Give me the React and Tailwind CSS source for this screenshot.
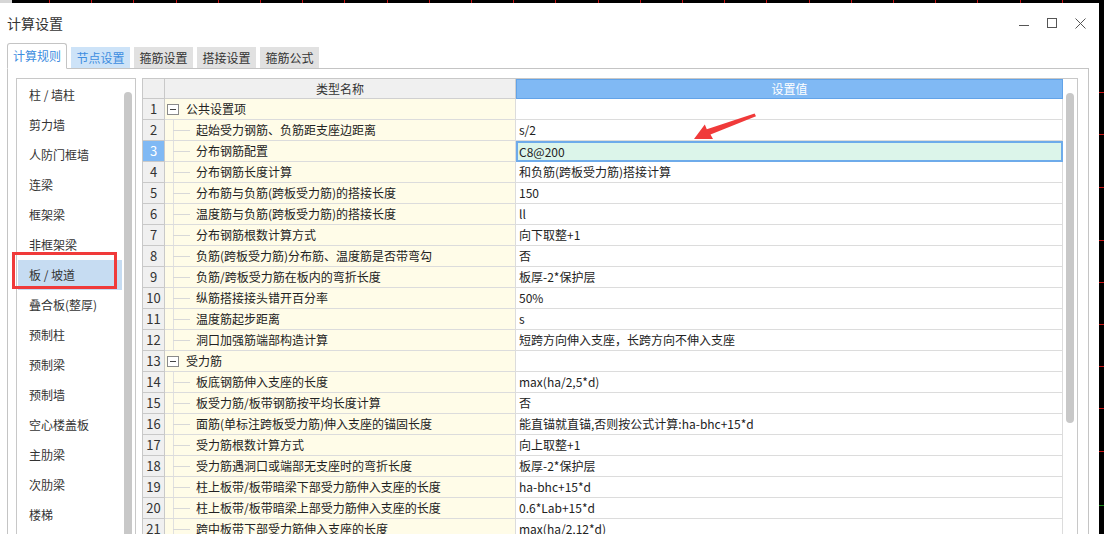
import React from "react";

const FONT = { fontFamily: '"Noto Sans CJK SC", "Noto Sans", sans-serif' };

const listItems = [
  "柱 / 墙柱",
  "剪力墙",
  "人防门框墙",
  "连梁",
  "框架梁",
  "非框架梁",
  "板 / 坡道",
  "叠合板(整厚)",
  "预制柱",
  "预制梁",
  "预制墙",
  "空心楼盖板",
  "主肋梁",
  "次肋梁",
  "楼梯",
];

const tabs = ["计算规则", "节点设置", "箍筋设置", "搭接设置", "箍筋公式"];

const rows = [
  { n: 1, group: true, name: "公共设置项", value: "" },
  { n: 2, name: "起始受力钢筋、负筋距支座边距离", value: "s/2" },
  { n: 3, name: "分布钢筋配置", value: "C8@200", selected: true },
  { n: 4, name: "分布钢筋长度计算", value: "和负筋(跨板受力筋)搭接计算" },
  { n: 5, name: "分布筋与负筋(跨板受力筋)的搭接长度", value: "150" },
  { n: 6, name: "温度筋与负筋(跨板受力筋)的搭接长度", value: "ll" },
  { n: 7, name: "分布钢筋根数计算方式", value: "向下取整+1" },
  { n: 8, name: "负筋(跨板受力筋)分布筋、温度筋是否带弯勾", value: "否" },
  { n: 9, name: "负筋/跨板受力筋在板内的弯折长度", value: "板厚-2*保护层" },
  { n: 10, name: "纵筋搭接接头错开百分率", value: "50%" },
  { n: 11, name: "温度筋起步距离", value: "s" },
  { n: 12, name: "洞口加强筋端部构造计算", value: "短跨方向伸入支座，长跨方向不伸入支座" },
  { n: 13, group: true, name: "受力筋", value: "" },
  { n: 14, name: "板底钢筋伸入支座的长度", value: "max(ha/2,5*d)" },
  { n: 15, name: "板受力筋/板带钢筋按平均长度计算", value: "否" },
  { n: 16, name: "面筋(单标注跨板受力筋)伸入支座的锚固长度", value: "能直锚就直锚,否则按公式计算:ha-bhc+15*d" },
  { n: 17, name: "受力筋根数计算方式", value: "向上取整+1" },
  { n: 18, name: "受力筋遇洞口或端部无支座时的弯折长度", value: "板厚-2*保护层" },
  { n: 19, name: "柱上板带/板带暗梁下部受力筋伸入支座的长度", value: "ha-bhc+15*d" },
  { n: 20, name: "柱上板带/板带暗梁上部受力筋伸入支座的长度", value: "0.6*Lab+15*d" },
  { n: 21, name: "跨中板带下部受力筋伸入支座的长度", value: "max(ha/2,12*d)" },
];

const topTicks = Array.from({ length: 25 }, (_, i) => Math.round(49 + i * 42.2));
const sideTicks = [89, 131, 184, 237, 279, 321, 363, 405, 448];

const TableRow = ({ row }) => (
  <div className="flex h-[21px] text-[12px] leading-[20px] text-[#222]">
    <div
      className={
        "w-[22px] shrink-0 border-r border-b border-[#c9c9c9] text-center text-[13px] " +
        (row.selected ? "bg-[#80b9f4] text-white" : "bg-[#f0f0f0] text-[#333]")
      }
    >
      {row.n}
    </div>
    <div className="relative w-[351px] shrink-0 border-r border-b border-[#dcdcdc] bg-[#fffce8] whitespace-nowrap">
      {row.group ? (
        <div className="flex h-full items-center">
          <div className="ml-[2px] flex h-[11px] w-[12px] items-center justify-center border border-[#8a8a8a] bg-white">
            <div className="h-px w-[6px] bg-[#444]" />
          </div>
          <span className="ml-[7px]">{row.name}</span>
        </div>
      ) : (
        <>
          <div className="absolute left-[8px] top-0 h-full w-px bg-[#e0e0e0]" />
          <div className="absolute left-[8px] top-[10px] h-px w-[17px] bg-[#d8d8d8]" />
          <span className="pl-[31px]">{row.name}</span>
        </>
      )}
    </div>
    {row.selected ? (
      <div className="w-[547px] shrink-0 border-2 border-[#6eabea] bg-[#dcf5ea] pl-[1px] leading-[17px]">
        {row.value}
      </div>
    ) : (
      <div className="w-[547px] shrink-0 border-r border-b border-[#dcdcdc] bg-white pl-[3px] whitespace-nowrap">
        {row.value}
      </div>
    )}
  </div>
);

export default function App() {
  return (
    <div className="relative flex h-[534px] w-[1104px] flex-col overflow-hidden bg-black" style={FONT}>
      <svg width="1104" height="3" className="block shrink-0">
        <rect x="0" y="0" width="12" height="3" fill="#d6d6d6" />
        <rect x="12" y="0" width="1092" height="3" fill="#000" />
        {topTicks.map((x) => (
          <rect key={x} x={x} y="0" width="1" height="3" fill="#c81414" />
        ))}
      </svg>

      <div className="flex min-h-0 flex-1">
        {/* dialog */}
        <div className="flex w-[1099px] shrink-0 flex-col bg-white">
          <div className="flex h-[40px] shrink-0 items-center justify-between pl-[7px] pr-[13px]">
            <span className="text-[14px] text-[#333]">计算设置</span>
            <div className="flex items-center gap-[18px]">
              <svg width="10" height="10" viewBox="0 0 10 10">
                <line x1="0" y1="7.5" x2="10" y2="7.5" stroke="#555" strokeWidth="1" />
              </svg>
              <svg width="10" height="10" viewBox="0 0 10 10">
                <rect x="0.5" y="0.5" width="9" height="9" fill="none" stroke="#555" strokeWidth="1" />
              </svg>
              <svg width="11" height="11" viewBox="0 0 11 11">
                <path d="M0.5 0.5 L10.5 10.5 M10.5 0.5 L0.5 10.5" stroke="#555" strokeWidth="1" />
              </svg>
            </div>
          </div>

          <div className="relative z-10 -mb-px flex h-[26px] shrink-0 items-end gap-[4px] pl-[7px] text-[12px]">
            {tabs.map((t, i) =>
              i === 0 ? (
                <div
                  key={t}
                  className="flex h-[26px] w-[60px] items-center justify-center rounded-t-[3px] border border-[#c4c4c4] border-b-white bg-white text-[#3d8de0]"
                >
                  {t}
                </div>
              ) : (
                <div
                  key={t}
                  className={
                    "mb-px flex h-[21px] w-[59px] items-center justify-center " +
                    (i === 1 ? "bg-[#cde3f8] text-[#3d8de0]" : "bg-[#e1e1e1] text-[#333]")
                  }
                >
                  {t}
                </div>
              )
            )}
          </div>

          <div className="ml-[7px] mr-[10px] flex min-h-0 flex-1 items-start gap-[6px] overflow-hidden border-x border-t border-[#c4c4c4] pl-[8px] pt-[9px]">
            {/* left list */}
            <div className="flex h-[520px] w-[120px] shrink-0 border border-[#c8c8c8] bg-white">
              <div className="flex-1 pl-[1px] text-[12px] text-[#333]">
                {listItems.map((item, i) => (
                  <div
                    key={item}
                    className={
                      "relative flex h-[30px] items-center pl-[11px] whitespace-nowrap " +
                      (i === 0 ? "mt-px " : "") +
                      (i === 6 ? "bg-[#c6dcf2]" : "")
                    }
                  >
                    {item}
                    {i === 6 && (
                      <div className="pointer-events-none absolute -left-[6px] -top-[8px] h-[37px] w-[105px] border-[3px] border-[#f03a3a]" />
                    )}
                  </div>
                ))}
              </div>
              <div className="w-[13px] shrink-0 pl-[2px]">
                <div className="mt-[13px] h-[600px] w-[8px] rounded-full bg-[#c8c8c8]" />
              </div>
            </div>

            {/* table */}
            <div className="flex w-[936px] shrink-0 border border-[#c8c8c8] bg-white">
              <div className="w-[920px] shrink-0">
                <div className="flex h-[20px] text-[12px] leading-[19px]">
                  <div className="w-[22px] shrink-0 border-r border-b border-[#c9c9c9] bg-[#f0f0f0]" />
                  <div className="w-[351px] shrink-0 border-r border-b border-[#d0d0d0] bg-[#f0f0f0] text-center text-[#333]">
                    类型名称
                  </div>
                  <div className="w-[547px] shrink-0 border border-[#62a3e8] bg-[#80b9f4] text-center leading-[18px] text-white">
                    设置值
                  </div>
                </div>
                {rows.map((r) => (
                  <TableRow key={r.n} row={r} />
                ))}
              </div>
              <div className="w-[14px] shrink-0 pl-[3px]">
                <div className="mt-[14px] h-[330px] w-[8px] rounded-full bg-[#c8c8c8]" />
              </div>
            </div>
          </div>
        </div>

        <svg width="5" height="531" className="block shrink-0">
          <rect x="0" y="0" width="5" height="531" fill="#000" />
          {sideTicks.map((y) => (
            <rect key={y} x="0" y={y} width="5" height="1" fill="#c81414" />
          ))}
          <rect x="0" y="502" width="5" height="1" fill="#1a8a1a" />
        </svg>
      </div>

      {/* annotation arrow */}
      <svg
        className="pointer-events-none absolute left-[690px] top-[110px]"
        width="70"
        height="35"
        viewBox="690 110 70 35"
      >
        <polygon
          points="694,139 713,139 710.5,134.5 756,116.2 754.6,113.6 706.8,129.2 704.8,124.6"
          fill="#f03a3a"
        />
      </svg>
    </div>
  );
}
